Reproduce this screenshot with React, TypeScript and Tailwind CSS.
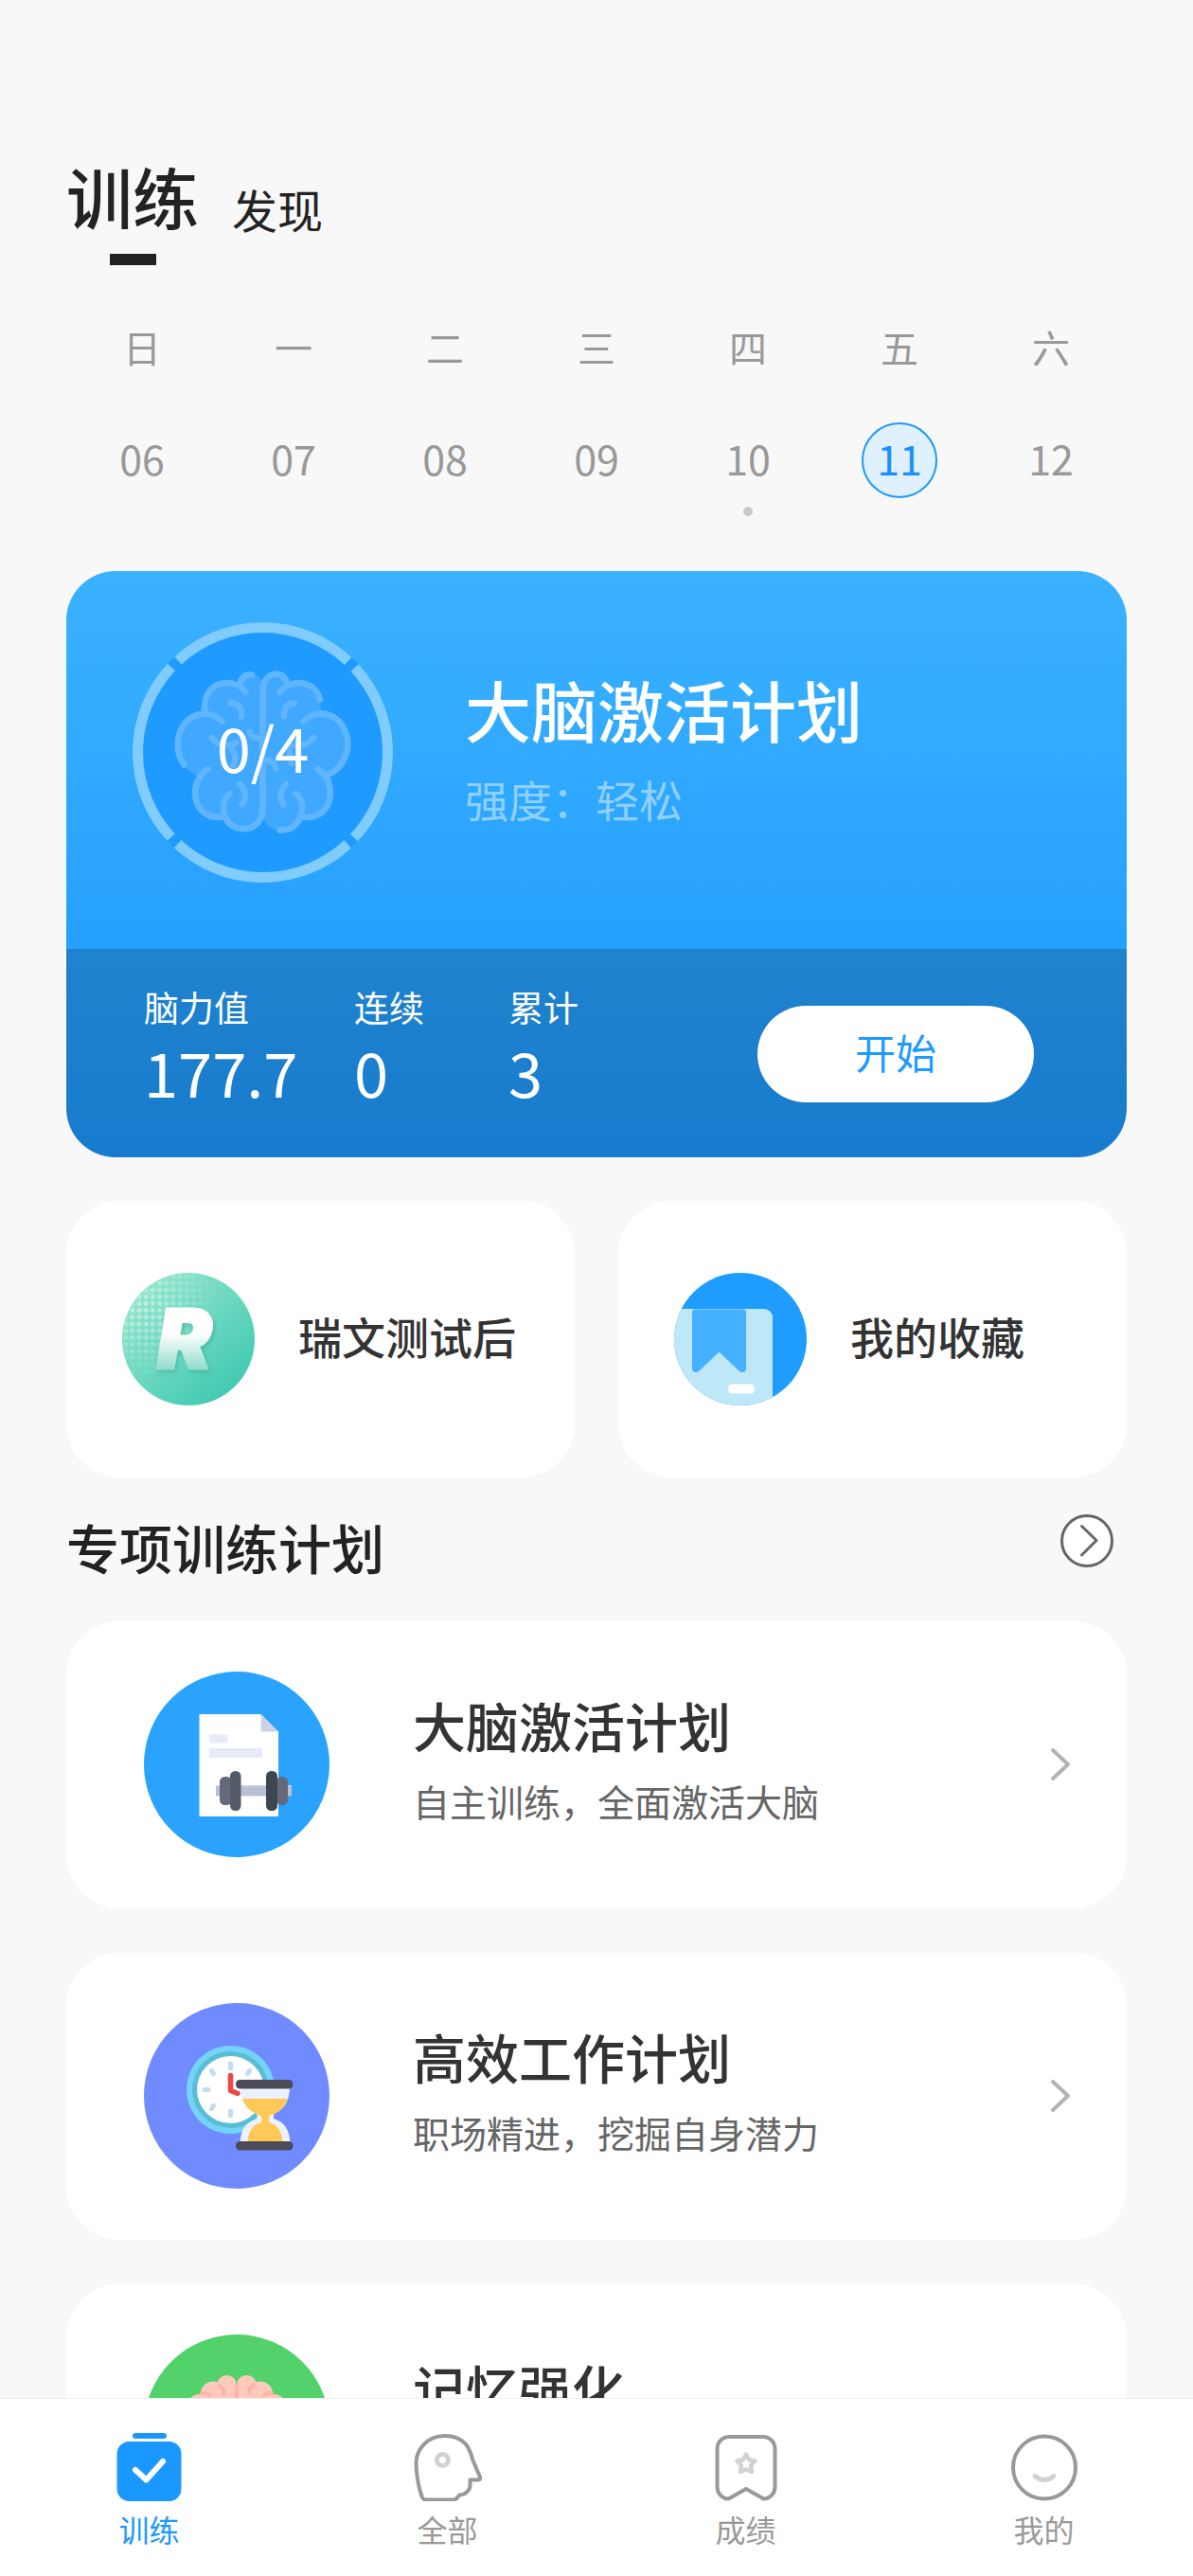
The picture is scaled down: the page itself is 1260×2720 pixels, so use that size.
import { useState } from 'react';

const days = [
  { week: '日', date: '06' },
  { week: '一', date: '07' },
  { week: '二', date: '08' },
  { week: '三', date: '09' },
  { week: '四', date: '10', dot: true },
  { week: '五', date: '11' },
  { week: '六', date: '12' },
];

const stats = [
  { label: '脑力值', value: '177.7', width: 'w-[222px]' },
  { label: '连续', value: '0', width: 'w-[163px]' },
  { label: '累计', value: '3', width: 'w-[163px]' },
];

const plans = [
  { title: '大脑激活计划', desc: '自主训练，全面激活大脑', icon: <DumbbellIcon /> },
  { title: '高效工作计划', desc: '职场精进，挖掘自身潜力', icon: <HourglassIcon /> },
  { title: '记忆强化', desc: '', icon: <MemoryIcon /> },
];

function ProgressRing() {
  return (
    <svg viewBox="0 0 275 275" className="w-[275px] h-[275px]" fill="none" aria-hidden="true">
      <circle cx="137.5" cy="137.5" r="137.5" fill="#1f9bff" />
      <circle cx="137.5" cy="137.5" r="132" stroke="#80ccff" strokeWidth="11" strokeDasharray="197.4 9.95" transform="rotate(47.2 137.5 137.5)" />
      <path
        d="M137.5 64C133 52 116 52 112 64C92 58 74 72 76 93C52 96 40 122 52 148C56 156 62 158 68 162C58 184 72 208 96 207C102 224 130 226 137.5 206C145 226 174 224 180 207C204 208 218 184 208 160C236 144 234 98 199 94C200 72 182 58 163 64C159 52 142 52 137.5 64Z"
        fill="#41a8ff"
      />
      <g stroke="#60b5ff" strokeWidth="6.5" strokeLinecap="round" strokeLinejoin="round">
        <path d="M126.500 55.500C119 54 114 59 113.500 66" />
        <path d="M119.500 74C107 56 74 62 76 93" />
        <path d="M94.500 104.500C80 90 56 96 49 119C46 132 49 143 54.500 150.500" />
        <path d="M79.500 155C58 169 62 208 94 206" />
        <path d="M102.500 181C96 186 94 196 98 206C106 225 137.500 222 137.500 197V73C138 49 163 50 163.500 67" />
        <path d="M155.500 74C168 58 194 62 198 82" />
        <path d="M180.500 104.500C196 90 219 96 226 119C231 137 221 155 206.500 161" />
        <path d="M195.500 155C217 169 213 208 181 206" />
        <path d="M172.500 181C180 187 181 196 177 206C173 216 165 220 155.500 219.500" />
        <path d="M104 85.500C111 85 116 90 115 99.500M171 85.500C164 85 159 90 160 99.500" />
        <path d="M113.500 171C120 178 120 186 115.500 192.500M162 171C155 178 155 186 159.500 192.500" />
        <path d="M123.500 116C125 120 129 123 134 122.500M84 122C90 131 102 132 110 127M103 131C109 137 110 143 106.500 151" />
        <path d="M191 122C186 128 180 131 172 130M167 130C165 136 165 142 168 149M139.500 146C146 145 150 149 151 154.500" />
      </g>
    </svg>
  );
}

function RavenIcon() {
  return (
    <svg viewBox="0 0 140 140" className="w-[140px] h-[140px] shrink-0" aria-hidden="true">
      <defs>
        <linearGradient id="raven-bg" x1="0.15" y1="0.1" x2="0.85" y2="0.9">
          <stop offset="0" stopColor="#93e5cd" />
          <stop offset="1" stopColor="#41c9b2" />
        </linearGradient>
        <linearGradient id="raven-letter" gradientUnits="userSpaceOnUse" x1="0" y1="38" x2="0" y2="103">
          <stop offset="0.4" stopColor="#ffffff" />
          <stop offset="1" stopColor="#8fdbc9" />
        </linearGradient>
        <radialGradient id="raven-fade" gradientUnits="userSpaceOnUse" cx="24" cy="36" r="80">
          <stop offset="0" stopColor="#fff" stopOpacity="0.5" />
          <stop offset="1" stopColor="#fff" stopOpacity="0" />
        </radialGradient>
        <pattern id="raven-dots" width="7.2" height="7.2" patternUnits="userSpaceOnUse">
          <circle cx="3.600" cy="3.600" r="2.500" fill="#fff" />
        </pattern>
        <mask id="raven-mask">
          <rect width="140" height="140" fill="url(#raven-dots)" />
        </mask>
      </defs>
      <circle cx="70" cy="70" r="70" fill="url(#raven-bg)" />
      <circle cx="70" cy="70" r="69" fill="url(#raven-fade)" mask="url(#raven-mask)" />
      <text
        x="37"
        y="101"
        fontSize="86"
        fontWeight="900"
        fontStyle="italic"
        fontFamily="Inter, sans-serif"
        fill="url(#raven-letter)"
        stroke="url(#raven-letter)"
        strokeWidth="3"
        className="drop-shadow-[2px_3px_2px_rgba(40,150,130,0.35)]"
      >
        R
      </text>
    </svg>
  );
}

function FavoriteIcon() {
  return (
    <svg viewBox="0 0 140 140" className="w-[140px] h-[140px] shrink-0" aria-hidden="true">
      <clipPath id="fav-clip">
        <circle cx="70" cy="70" r="70" />
      </clipPath>
      <g clipPath="url(#fav-clip)">
        <rect width="140" height="140" fill="#1e9cff" />
        <rect x="-20" y="38" width="124" height="120" rx="9" fill="#bee7f7" />
        <path d="M22 38.500H73Q76 38.500 76 42V101Q76 105 72 105Q70 105 68 103L47.500 83.500L27 103Q25 105 23 105Q19 105 19 101V42Q19 38.500 22 38.500Z" fill="#45b0ff" />
        <rect x="57" y="117.500" width="28" height="10" rx="4.500" fill="#fff" />
      </g>
    </svg>
  );
}

function DumbbellIcon() {
  return (
    <svg viewBox="0 0 196 196" className="w-[196px] h-[196px] shrink-0" aria-hidden="true">
      <circle cx="98" cy="98" r="98" fill="#2aa3ff" />
      <path d="M58.500 45H123.500L142 63.500V153H58.500Z" fill="#fff" />
      <path d="M123.500 45L142 63.500H123.500Z" fill="#ccd1e3" />
      <path d="M69 66.500H88.500V75.500H69ZM69 81H125V91H69Z" fill="#e7ebf7" />
      <rect x="76" y="120" width="80" height="11.500" fill="#bac0d3" />
      <rect x="76" y="120" width="80" height="1.500" fill="#ccd1e3" />
      <rect x="80" y="111" width="13" height="30" rx="5.500" fill="#636978" />
      <rect x="140" y="111" width="12" height="30" rx="5.500" fill="#636978" />
      <rect x="91" y="105" width="11.500" height="42" rx="5.500" fill="#545b68" />
      <rect x="129" y="105" width="12" height="42" rx="5.500" fill="#3f4653" />
    </svg>
  );
}

function HourglassIcon() {
  return (
    <svg viewBox="0 0 196 196" className="w-[196px] h-[196px] shrink-0" fill="none" aria-hidden="true">
      <circle cx="98" cy="98" r="98" fill="#708bff" />
      <circle cx="91.500" cy="91.500" r="46.500" fill="#74d4f7" />
      <circle cx="91.500" cy="91.500" r="40.500" fill="#58bdd5" />
      <circle cx="91.500" cy="91.500" r="35.500" fill="#fff" />
      <path d="M91.500 64V69M64 91.500H68M91.500 114V119M71.500 71.500L73.500 74.500M111.500 71.500L109.500 74.500M71.500 111.500L73.500 108.500" stroke="#c2dcf4" strokeWidth="5" strokeLinecap="round" />
      <path d="M91.500 76.500V92.500L99 95.500" stroke="#ee464b" strokeWidth="5.500" strokeLinecap="round" strokeLinejoin="round" />
      <path d="M102.500 88H154C154 104 148 112 137 117.500V122C149 126 154 134 154.500 149H101.500C102 134 107 126 119.500 122V117.500C108 112 102.500 104 102.500 88Z" fill="#ecf3fd" />
      <path d="M104 101H152C150 109 143 115 135 118Q132 119 132 122V126C141 128 146 136 146.500 147H109.500C110 136 115 128 124.500 126V122Q124.500 119 121 118C113 115 106 109 104 101Z" fill="#ffc957" />
      <rect x="97" y="81" width="60.500" height="9.500" rx="4.500" fill="#4c4c59" />
      <rect x="97" y="146" width="60.500" height="9.500" rx="4.500" fill="#4c4c59" />
    </svg>
  );
}

function MemoryIcon() {
  return (
    <svg viewBox="0 0 196 196" className="w-[196px] h-[196px] shrink-0" fill="none" aria-hidden="true">
      <circle cx="98" cy="98" r="98" fill="#53d16b" />
      <g fill="#fdcabc">
        <circle cx="87.500" cy="53.500" r="10.500" />
        <circle cx="108.500" cy="53.500" r="10.500" />
        <circle cx="73" cy="62.500" r="13" />
        <circle cx="123" cy="62.500" r="13" />
        <circle cx="59" cy="77" r="14" />
        <circle cx="137" cy="77" r="14" />
        <rect x="50" y="64" width="96" height="84" rx="30" />
        <rect x="72" y="54" width="52" height="30" />
      </g>
      <path d="M98 54V146M84 63Q85 57 80 54M111 61Q111 56 116 53M61 62Q66 61 69 64M135 62Q130 61 127 64" stroke="#fdb3a7" strokeWidth="4" strokeLinecap="round" />
    </svg>
  );
}

function TrainIcon() {
  return (
    <svg viewBox="0 0 72 72" className="w-[72px] h-[72px]" fill="none" aria-hidden="true">
      <rect x="18" y="0" width="36" height="6" rx="3" fill="currentColor" />
      <rect x="1.500" y="9" width="68" height="63" rx="13" fill="currentColor" />
      <path d="M21 39L32.500 49.500L50 30" stroke="#fff" strokeWidth="6" strokeLinecap="round" strokeLinejoin="round" />
    </svg>
  );
}

function HeadIcon() {
  return (
    <svg viewBox="0 0 72 72" className="w-[72px] h-[72px]" fill="none" aria-hidden="true">
      <path
        d="M13 70.500H42C46 70.500 46 67 48.500 65.500C55 65 60 60 59.500 54V49.500H68Q71 49.500 70 46.500L62.500 29C60 22 58 3 32.500 3C14 3 2 18 2.500 33C3 46 5 57 8.500 67Q9.500 70.500 13 70.500Z"
        stroke="currentColor"
        strokeWidth="4"
        strokeLinejoin="round"
      />
      <circle cx="30.500" cy="28.500" r="6" stroke="#d2d2d2" strokeWidth="5" />
    </svg>
  );
}

function ScoreIcon() {
  return (
    <svg viewBox="0 0 72 72" className="w-[72px] h-[72px]" fill="none" strokeLinejoin="round" aria-hidden="true">
      <path d="M18.500 4H53.500C61 4 66.500 9.500 66.500 17V57C66.500 64 61 69.500 54.500 69.500L36 59L17.500 69.500C11 69.500 5.500 64 5.500 57V17C5.500 9.500 11 4 18.500 4Z" stroke="currentColor" strokeWidth="4" />
      <path d="M36 22.500L39 28.200L45.500 29.500L41 34.200L42 41L36 38.200L30 41L31 34.200L26.500 29.500L33 28.200Z" stroke="#d2d2d2" strokeWidth="4.500" />
    </svg>
  );
}

function MineIcon() {
  return (
    <svg viewBox="0 0 72 72" className="w-[72px] h-[72px]" fill="none" strokeLinecap="round" aria-hidden="true">
      <circle cx="36" cy="36.500" r="33" stroke="currentColor" strokeWidth="4" />
      <path d="M26 45.500Q36 53.500 46 45.500" stroke="#d2d2d2" strokeWidth="5" />
    </svg>
  );
}

const navItems = [
  { label: '训练', icon: <TrainIcon /> },
  { label: '全部', icon: <HeadIcon /> },
  { label: '成绩', icon: <ScoreIcon /> },
  { label: '我的', icon: <MineIcon /> },
];

export default function App() {
  const [selected, setSelected] = useState('11');
  const [active, setActive] = useState('训练');

  return (
    <div className="flex flex-col h-screen bg-[#f8f8f8] text-[#333] font-['Noto_Sans_CJK_SC',sans-serif]">
      <main className="flex-1 min-h-0 overflow-y-auto [scrollbar-width:none] px-[70px] pt-[167px]">
        <header className="flex items-start gap-[35px] text-[#222]">
          <button className="flex flex-col items-center">
            <span className="text-[70px] leading-[80px] font-medium">训练</span>
            <span className="w-[49px] h-3 mt-[21px] bg-[#222]" />
          </button>
          <button className="pt-[28px] text-[48px] leading-[50px]">发现</button>
        </header>

        <section className="grid grid-cols-7 mt-[66px] text-[#999]">
          {days.map(day => (
            <div key={day.date} className="flex flex-col items-center">
              <span className="text-[40px] leading-[40px]">{day.week}</span>
              <button
                onClick={() => setSelected(day.date)}
                className={
                  selected === day.date
                    ? 'w-20 h-20 mt-[60px] pb-[6px] rounded-full border-2 border-[#1e9bf5] bg-[#dff1ff] text-[#1990ff] text-[43px] leading-[44px]'
                    : 'w-20 h-20 mt-[60px] pb-[6px] text-[43px] leading-[44px]'
                }
              >
                {day.date}
              </button>
              <span className={day.dot ? 'w-[10px] h-[10px] mt-[9px] rounded-full bg-[#c8c8c8]' : 'h-[10px] mt-[9px]'} />
            </div>
          ))}
        </section>

        <section className="mt-[58px] rounded-[52px] overflow-hidden text-white">
          <div className="flex items-center pt-[54px] pb-[70px] pl-[70px] bg-linear-to-b from-[#3bb2ff] to-[#25a0ff]">
            <div className="relative shrink-0">
              <ProgressRing />
              <span className="absolute inset-0 flex items-center justify-center pb-3 text-[65px]">0/4</span>
            </div>
            <div className="ml-[76px] pb-[10px]">
              <h1 className="text-[70px] leading-[80px] font-medium">大脑激活计划</h1>
              <p className="mt-[26px] text-[46px] leading-[56px] text-[#90d0ff]">强度：轻松</p>
            </div>
          </div>
          <div className="flex pt-[39px] pb-[58px] pl-[82px] pr-[98px] bg-linear-to-b from-[#2083ce] to-[#177bce]">
            {stats.map(stat => (
              <div key={stat.label} className={stat.width}>
                <p className="text-[37px] leading-[44px]">{stat.label}</p>
                <p className="mt-[13px] text-[65px] leading-[66px]">{stat.value}</p>
              </div>
            ))}
            <button className="self-end ml-auto w-[292px] h-[102px] pb-[6px] rounded-full bg-white text-[#1e9bff] text-[43px] leading-[44px]">开始</button>
          </div>
        </section>

        <section className="grid grid-cols-2 gap-[46px] mt-[46px]">
          <a href="#raven" className="flex items-center gap-[46px] py-[76px] pl-[59px] rounded-[56px] bg-white">
            <RavenIcon />
            <span className="pb-2 text-[46px] leading-[56px] font-medium">瑞文测试后</span>
          </a>
          <a href="#favorites" className="flex items-center gap-[46px] py-[76px] pl-[59px] rounded-[56px] bg-white">
            <FavoriteIcon />
            <span className="pb-2 text-[46px] leading-[56px] font-medium">我的收藏</span>
          </a>
        </section>

        <section className="mt-[37px]">
          <div className="flex items-start justify-between pr-[14px]">
            <h2 className="text-[56px] leading-[72px] font-medium text-[#222]">专项训练计划</h2>
            <button aria-label="更多" className="mt-[2px]">
              <svg viewBox="0 0 56 56" className="w-14 h-14" fill="none" stroke="#666" strokeWidth="3" strokeLinecap="round" strokeLinejoin="round">
                <circle cx="28" cy="28" r="26.500" fill="#fff" />
                <path d="M22.500 12.500L38 27.500L22.500 43" />
              </svg>
            </button>
          </div>

          <div className="flex flex-col gap-[47px] mt-[43px]">
            {plans.map(plan => (
              <a key={plan.title} href="#plan" className="flex items-center pt-[53px] pb-[54px] pl-[82px] pr-[58px] rounded-[56px] bg-white">
                {plan.icon}
                <div className="flex-1 self-start pt-5 ml-[88px]">
                  <h3 className="text-[56px] leading-[72px] font-medium">{plan.title}</h3>
                  {plan.desc && <p className="mt-5 text-[39px] leading-[48px] text-[#666]">{plan.desc}</p>}
                </div>
                <svg viewBox="0 0 24 38" className="w-6 h-[38px]" fill="none" stroke="#b3b3b3" strokeWidth="4" strokeLinecap="round" strokeLinejoin="round" aria-hidden="true">
                  <path d="M4 4L20 19L4 34" />
                </svg>
              </a>
            ))}
          </div>
        </section>
      </main>

      <nav className="grid grid-cols-4 shrink-0 pt-9 pb-[30px] border-t border-[#f0f0f0] bg-white">
        {navItems.map(item => (
          <button
            key={item.label}
            onClick={() => setActive(item.label)}
            className={active === item.label ? 'flex flex-col items-center gap-[9px] text-[#1b98ff]' : 'flex flex-col items-center gap-[9px] text-[#999]'}
          >
            {item.icon}
            <span className="text-[32px] leading-[40px]">{item.label}</span>
          </button>
        ))}
      </nav>
    </div>
  );
}
